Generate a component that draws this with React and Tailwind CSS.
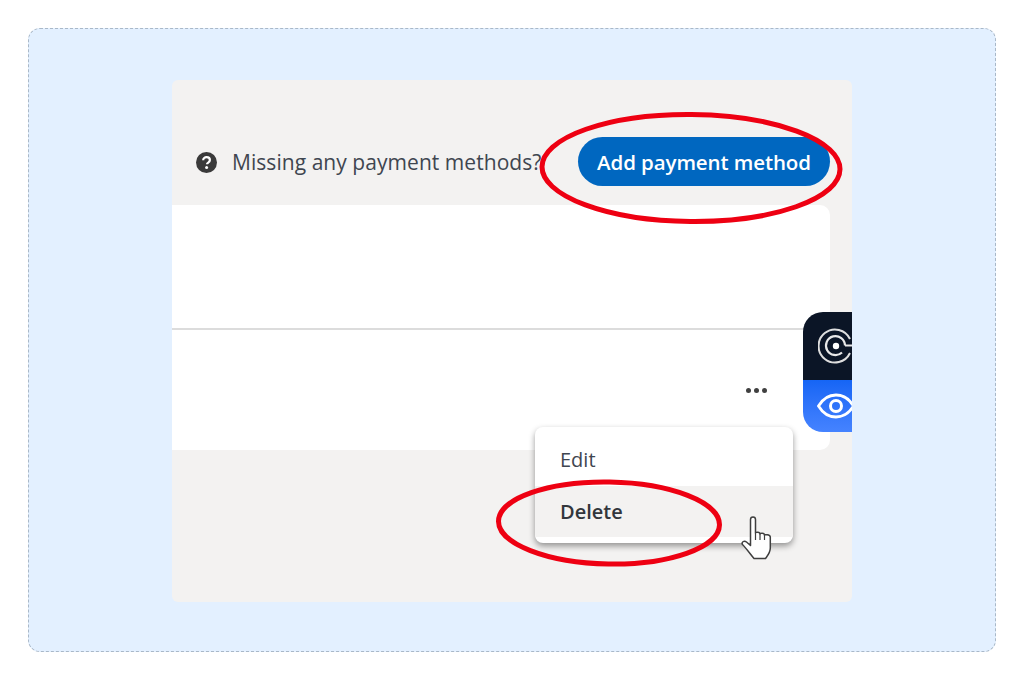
export default function App() {
  return (
    <div className="w-[1024px] h-[680px] bg-white p-[28px] font-['Open_Sans','Noto_Sans',sans-serif]">
      <div className="w-[968px] h-[624px] rounded-[12px] border border-dashed border-[#a9b8c8] bg-[#e3f0ff] flex justify-center pt-[51px]">
        <div className="relative w-[680px] h-[522px] rounded-[6px] bg-[#f3f2f1] overflow-hidden">
          <div className="h-[125px] flex items-start pt-[57px] pl-[24px] pr-[22px]">
            <svg width="21" height="21" viewBox="0 0 21 21" className="mt-[15px] shrink-0">
              <circle cx="10.5" cy="10.5" r="10.5" fill="#3a3a3a" />
              <path d="M7.2 8.2c0-1.900 1.500-3 3.400-3 1.900 0 3.300 1.100 3.300 2.800 0 1.300-.8 2-1.700 2.600-.8.5-1.200.9-1.200 1.700" fill="none" stroke="#fff" strokeWidth="2.2" />
              <circle cx="10.6" cy="15.6" r="1.5" fill="#fff" />
            </svg>
            <span className="ml-[15px] mt-[13px] text-[21px] leading-[25px] font-medium text-[#3f4650] tracking-[0.05px] whitespace-nowrap w-[307px]">Missing any payment methods?</span>
            <button className="w-[252px] h-[49px] ml-[39px] pt-[2px] rounded-full bg-[#0067c0] text-white text-[20.5px] font-semibold tracking-[-0.1px] whitespace-nowrap">
              Add payment method
            </button>
          </div>
          <div className="w-[658px] h-[245px] rounded-r-[10px] bg-white flex flex-col">
            <div className="h-[125px] border-b-2 border-[#dcdcdc]"></div>
            <div className="flex-1 flex justify-end pr-[63px] pt-[58px]">
              <div className="flex gap-[3px] h-[4px]">
                <span className="w-[5px] h-[5px] rounded-full bg-[#404040]"></span>
                <span className="w-[5px] h-[5px] rounded-full bg-[#404040]"></span>
                <span className="w-[5px] h-[5px] rounded-full bg-[#404040]"></span>
              </div>
            </div>
          </div>

          <div className="absolute left-[631px] top-[232px] w-[49px] h-[120px] rounded-l-[20px] overflow-hidden flex flex-col">
            <div className="h-[68px] bg-[#0b1526] flex items-center pl-[15px]">
              <svg width="34" height="40" viewBox="0 0 34 40" className="shrink-0">
                <path d="M32 13A16.500 16.500 0 1 0 32 27" fill="none" stroke="#dedede" strokeWidth="2" />
                <path d="M27 19.500A9.500 9.500 0 1 0 24 26.500" fill="none" stroke="#e8e8e8" strokeWidth="2.200" />
                <path d="M27 19.500H34" fill="none" stroke="#e8e8e8" strokeWidth="2" />
                <circle cx="18" cy="20" r="3.200" fill="#fff" />
              </svg>
            </div>
            <div className="flex-1 bg-gradient-to-b from-[#1565f5] to-[#4583ff] flex items-center pl-[14px]">
              <svg width="38" height="26" viewBox="0 0 38 26" className="shrink-0">
                <path d="M1.500 13C6 5.500 12 2 19 2s13 3.500 17.500 11C32 20.500 26 24 19 24S6 20.500 1.500 13z" fill="none" stroke="#fff" strokeWidth="2.800" />
                <circle cx="19" cy="13" r="5.500" fill="none" stroke="#fff" strokeWidth="3" />
              </svg>
            </div>
          </div>

          <div className="absolute left-[363px] top-[347px] w-[258px] h-[116px] rounded-[8px] bg-white shadow-[0_3px_6px_rgba(0,0,0,0.4)] overflow-hidden">
            <div className="h-[59px] pl-[25px] pt-[19px] text-[20px] leading-[27px] font-medium text-[#3f4650]">Edit</div>
            <div className="h-[51px] pl-[25px] pt-[12px] bg-[#f3f2f1] text-[20px] leading-[27px] font-semibold text-[#32363c]">Delete</div>
          </div>

          <svg width="36" height="46" viewBox="0 0 36 46" className="absolute left-[568px] top-[435px]">
            <path d="M10.500 4.500c0-3.500 5-3.500 5 0V18c0-1 4.500-1.500 4.500 1 0-1 4.500-1.500 4.500 1.200 0-.8 5.500-1 5.800 1.800V33c0 5-3.500 8.500-4.800 10.500H14C11 40 6 33 2.500 29.500c-1.500-2 1.500-4.500 4-2.500l4 3.500z" fill="#fff" stroke="#3f3f3f" strokeWidth="1.500" strokeLinejoin="round" />
            <path d="M15.500 18v7M20 19v6M24.500 20.200V25" stroke="#3f3f3f" strokeWidth="1.200" fill="none" />
          </svg>

          <svg width="680" height="522" viewBox="0 0 680 522" className="absolute left-0 top-0 pointer-events-none">
            <ellipse cx="519" cy="88" rx="149" ry="53.500" fill="none" stroke="#ee0012" strokeWidth="5" transform="rotate(0.500 519 88)" />
            <ellipse cx="437" cy="443" rx="110.500" ry="41" fill="none" stroke="#ee0012" strokeWidth="5" transform="rotate(1 437 443)" />
          </svg>
        </div>
      </div>
    </div>
  );
}
